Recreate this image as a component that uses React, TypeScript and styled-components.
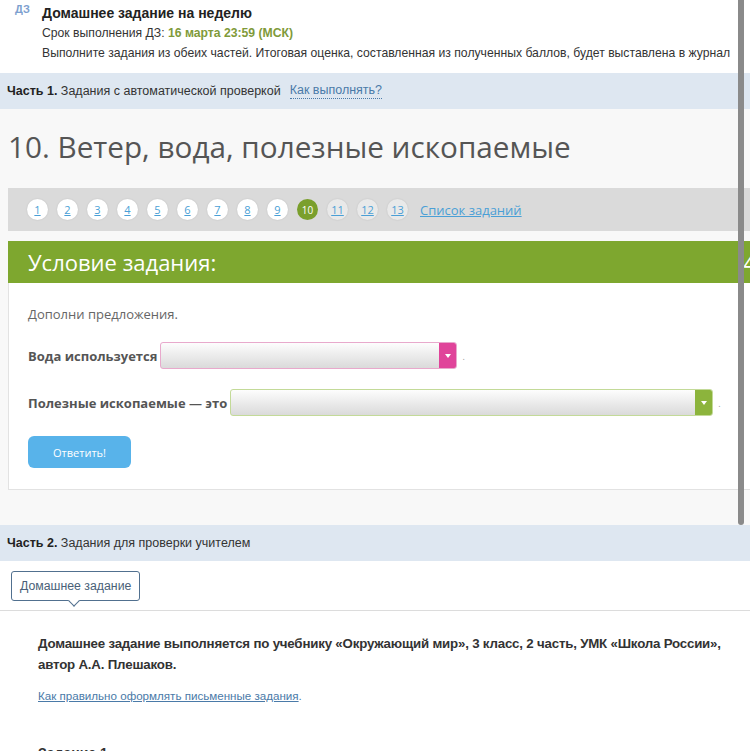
import React from 'react';
import styled, { createGlobalStyle } from 'styled-components';

const GlobalStyle = createGlobalStyle`
  body {
    margin: 0;
    background: #ffffff;
    font-family: 'Liberation Sans', Arial, sans-serif;
  }
`;

const S = {
  Page: styled.div`
    position: relative;
    width: 750px;
    height: 751px;
    overflow: hidden;
  `,
  Header: styled.div`
    display: flex;
    height: 73px;
    background: #ffffff;
  `,
  DzIcon: styled.div`
    flex-shrink: 0;
    width: 42px;
    padding: 3px 0 0 15px;
    box-sizing: border-box;
    font-size: 11px;
    font-weight: bold;
    color: #7d9fcf;
  `,
  HeaderText: styled.div`
    display: flex;
    flex-direction: column;
    padding-top: 3px;
    font-size: 12.2px;
    line-height: 20px;
    color: #333;
    white-space: nowrap;
  `,
  HeaderTitle: styled.div`
    font-size: 14px;
    font-weight: bold;
    color: #222;
  `,
  Deadline: styled.span`
    font-weight: bold;
    color: #7f9a3a;
  `,
  PartBar: styled.div`
    display: flex;
    align-items: center;
    gap: 9px;
    height: 36px;
    padding-left: 7px;
    background: #dee7f1;
    font-size: 12.5px;
    color: #333;
  `,
  PartLabel: styled.span`
    b {
      color: #222;
    }
  `,
  HowLink: styled.span`
    color: #4a7aa8;
    border-bottom: 1px dotted #4a7aa8;
    line-height: 15px;
  `,
  Part1Body: styled.div`
    background: #f8f8f8;
    padding: 0 0 35px 8px;
  `,
  Title: styled.h1`
    margin: 0;
    height: 79px;
    display: flex;
    align-items: center;
    font-family: 'Open Sans', sans-serif;
    font-weight: normal;
    font-size: 29.7px;
    color: #555;
    padding-bottom: 5px;
    box-sizing: border-box;
  `,
  Pager: styled.div`
    display: flex;
    align-items: center;
    gap: 9px;
    height: 43px;
    padding-left: 19px;
    background: #dadada;
    font-family: 'Open Sans', sans-serif;
  `,
  PageDot: styled.span<{ active?: boolean; dim?: boolean }>`
    width: 21px;
    height: 21px;
    border-radius: 50%;
    display: flex;
    align-items: center;
    justify-content: center;
    font-size: ${({ active }) => (active ? '10px' : '11px')};
    color: ${({ active }) => (active ? '#ffffff' : '#4a9fd6')};
    background: ${({ active, dim }) => (active ? '#7a9f2c' : dim ? '#e9e9e9' : '#ffffff')};
    box-shadow: ${({ active }) => (active ? 'none' : '0 0 2px rgba(0, 0, 0, 0.12)')};
    text-decoration: ${({ active }) => (active ? 'none' : 'underline')};
  `,
  ListLink: styled.span`
    margin-left: 3px;
    font-size: 13px;
    color: #4a9fd6;
    text-decoration: underline;
  `,
  TaskHead: styled.div`
    display: flex;
    justify-content: space-between;
    align-items: center;
    height: 42px;
    margin-top: 10px;
    padding-left: 20px;
    background: #7ea72f;
    color: #ffffff;
    font-family: 'Open Sans', sans-serif;
    font-size: 22px;
  `,
  Points: styled.span`
    margin-right: -6px;
  `,
  TaskBox: styled.div`
    background: #ffffff;
    border: 1px solid #e2e2e2;
    border-top: none;
    border-right: none;
    padding: 22px 19px 21px;
    font-family: 'Open Sans', sans-serif;
    font-size: 13px;
    color: #666;
  `,
  Lead: styled.div`
    margin-bottom: 19px;
  `,
  Row: styled.div`
    display: flex;
    align-items: center;
    gap: 3px;
    height: 27px;
    margin-bottom: 20px;
    font-weight: bold;
    color: #555;
  `,
  Select: styled.div<{ w: number; soft: string }>`
    display: flex;
    width: ${({ w }) => w}px;
    height: 27px;
    box-sizing: border-box;
    border: 1px solid ${({ soft }) => soft};
    border-radius: 3px;
    overflow: hidden;
    background: linear-gradient(#fdfdfd, #dadada);
  `,
  SelectField: styled.div`
    flex: 1;
  `,
  SelectButton: styled.div<{ tone: string }>`
    width: 17px;
    display: flex;
    align-items: center;
    justify-content: center;
    background: ${({ tone }) => tone};
    &::after {
      content: '';
      border-left: 3px solid transparent;
      border-right: 3px solid transparent;
      border-top: 4px solid #ffffff;
    }
  `,
  Dot: styled.span`
    font-weight: normal;
    font-size: 9px;
    color: #999;
    align-self: flex-end;
    margin: 0 0 6px 2px;
  `,
  Answer: styled.button`
    display: block;
    width: 103px;
    height: 32px;
    border: none;
    border-radius: 6px;
    background: #58b3ea;
    color: #ffffff;
    font-family: 'Open Sans', sans-serif;
    font-size: 11px;
    margin-top: 1px;
  `,
  TabRow: styled.div`
    height: 50px;
    padding: 10px 0 0 11px;
    box-sizing: border-box;
    border-bottom: 1px solid #dcdcdc;
  `,
  Tab: styled.div`
    position: relative;
    display: inline-flex;
    align-items: center;
    height: 28px;
    padding: 0 8px;
    border: 1px solid #51708f;
    border-radius: 3px;
    font-size: 12.3px;
    color: #4a5f78;
    background: #ffffff;
    &::after {
      content: '';
      position: absolute;
      left: 58px;
      bottom: -5px;
      width: 7px;
      height: 7px;
      background: #ffffff;
      border-right: 1px solid #51708f;
      border-bottom: 1px solid #51708f;
      transform: rotate(45deg);
    }
  `,
  HomeBody: styled.div`
    padding: 22px 0 0 38px;
    color: #333;
  `,
  HomeLead: styled.p`
    margin: 0;
    font-size: 13.3px;
    font-weight: bold;
    line-height: 21px;
    letter-spacing: -0.2px;
    white-space: nowrap;
  `,
  HowTo: styled.p`
    margin: 14px 0 0;
    font-size: 11.6px;
    color: #4a7aa8;
    span {
      text-decoration: underline;
    }
  `,
  TaskOne: styled.p`
    margin: 43px 0 0;
    font-size: 14px;
    font-weight: bold;
  `,
  Scrollbar: styled.div`
    position: absolute;
    left: 738px;
    top: 0;
    width: 6px;
    height: 525px;
    border-radius: 0 0 3px 3px;
    background: #8a8a8a;
  `,
};

const pages = Array.from({ length: 13 }, (_, i) => i + 1);

const App = () => {
  return (
    <S.Page>
      <GlobalStyle />
      <S.Header>
        <S.DzIcon>ДЗ</S.DzIcon>
        <S.HeaderText>
          <S.HeaderTitle>Домашнее задание на неделю</S.HeaderTitle>
          <div>
            Срок выполнения ДЗ: <S.Deadline>16 марта 23:59 (МСК)</S.Deadline>
          </div>
          <div>
            Выполните задания из обеих частей. Итоговая оценка, составленная из полученных баллов, будет выставлена в журнал
          </div>
        </S.HeaderText>
      </S.Header>

      <S.PartBar>
        <S.PartLabel>
          <b>Часть 1.</b> Задания с автоматической проверкой
        </S.PartLabel>
        <S.HowLink>Как выполнять?</S.HowLink>
      </S.PartBar>

      <S.Part1Body>
        <S.Title>10. Ветер, вода, полезные ископаемые</S.Title>
        <S.Pager>
          {pages.map((n) => (
            <S.PageDot key={n} active={n === 10} dim={n > 10}>
              {n}
            </S.PageDot>
          ))}
          <S.ListLink>Список заданий</S.ListLink>
        </S.Pager>
        <S.TaskHead>
          Условие задания:
          <S.Points>4</S.Points>
        </S.TaskHead>
        <S.TaskBox>
          <S.Lead>Дополни предложения.</S.Lead>
          <S.Row>
            Вода используется
            <S.Select w={297} soft="#e8a9cc">
              <S.SelectField />
              <S.SelectButton tone="#e0449a" />
            </S.Select>
            <S.Dot>.</S.Dot>
          </S.Row>
          <S.Row>
            Полезные ископаемые — это
            <S.Select w={483} soft="#c3da98">
              <S.SelectField />
              <S.SelectButton tone="#8cb43c" />
            </S.Select>
            <S.Dot>.</S.Dot>
          </S.Row>
          <S.Answer>Ответить!</S.Answer>
        </S.TaskBox>
      </S.Part1Body>

      <S.PartBar>
        <S.PartLabel>
          <b>Часть 2.</b> Задания для проверки учителем
        </S.PartLabel>
      </S.PartBar>

      <S.TabRow>
        <S.Tab>Домашнее задание</S.Tab>
      </S.TabRow>

      <S.HomeBody>
        <S.HomeLead>
          Домашнее задание выполняется по учебнику «Окружающий мир», 3 класс, 2 часть, УМК «Школа России»,
          <br />
          автор А.А. Плешаков.
        </S.HomeLead>
        <S.HowTo>
          <span>Как правильно оформлять письменные задания</span>.
        </S.HowTo>
        <S.TaskOne>Задание 1.</S.TaskOne>
      </S.HomeBody>

      <S.Scrollbar />
    </S.Page>
  );
};

export default App;
